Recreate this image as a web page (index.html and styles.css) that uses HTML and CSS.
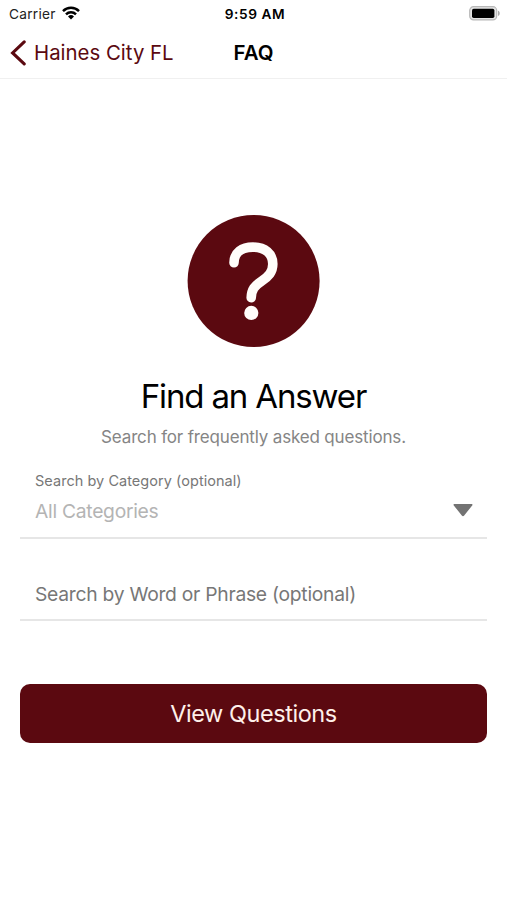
FILE: index.html
```html
<!DOCTYPE html>
<html lang="en">
<head>
<meta charset="utf-8">
<title>FAQ</title>
<link rel="stylesheet" href="styles.css">
</head>
<body>
<div class="status">
  <div class="status-left"><span class="carrier">Carrier</span>
    <svg class="wifi" width="18" height="14" viewBox="0 0 18 14"><g fill="none" stroke="#000" stroke-width="2.5"><path d="M1 5.1a11.4 11.4 0 0 1 16 0"/><path d="M4 8.3a7.1 7.1 0 0 1 10 0"/></g><path d="M9 13.6l-3-3.1a4.3 4.3 0 0 1 6 0z"/></svg>
  </div>
  <span class="time">9:59 AM</span>
  <svg class="battery" width="32" height="15" viewBox="0 0 32 15"><rect x=".7" y=".7" width="27" height="13.2" rx="3.8" fill="#e4e4e4" stroke="#b8b8b8" stroke-width="1.2"/><rect x="3" y="2.7" width="22.4" height="9.2" rx="1.7"/><path d="M29 4.7c2.3.6 2.3 4.5 0 5.2z" fill="#aaa"/></svg>
</div>
<header class="nav">
  <a class="back"><svg width="16" height="26" viewBox="0 0 16 26"><path d="M14.2 1.9L2.6 12.9 14.2 23.9" fill="none" stroke="#5b0910" stroke-width="3.1" stroke-linecap="round"/></svg><span>Haines City FL</span></a>
  <h1>FAQ</h1>
</header>
<main>
  <svg class="hero" width="134" height="134" viewBox="0 0 134 134"><circle cx="66.6" cy="67" r="66" fill="#5b0910"/><path d="M47 48.5C47 38 55 32.8 66 32.8c12 0 19.8 6.6 19.8 17 0 8-4.3 12.3-11 16.8-7.1 4.7-10.4 8.5-10.6 16.9" transform="translate(0 .3)" fill="none" stroke="#fffdfa" stroke-width="9.6" stroke-linecap="round" stroke-linejoin="round"/><circle cx="64.3" cy="98.9" r="7.1" fill="#fffdfa"/></svg>
  <h2>Find an Answer</h2>
  <p class="sub">Search for frequently asked questions.</p>
  <div class="field select">
    <div><div class="label">Search by Category (optional)</div><div class="value">All Categories</div></div>
    <svg width="20" height="14" viewBox="0 0 20 14"><path d="M1.2 1h17.6c.8 0 .9.8.4 1.4l-8 10.2q-1.2 1.2-2.4 0l-8-10.2C.3 1.8.4 1 1.2 1z" fill="#737373"/></svg>
  </div>
  <div class="field phrase"><span>Search by Word or Phrase (optional)</span></div>
  <button>View Questions</button>
</main>
</body>
</html>
```
FILE: styles.css
```css
* { box-sizing: border-box; }
body { margin: 0; height: 900px; overflow: hidden; background: #fff; color: #000; font-family: Inter, "Liberation Sans", sans-serif; }
svg { display: block; flex: none; }
.status { height: 27px; display: grid; grid-template-columns: 1fr auto 1fr; align-items: center; padding: 0 6px 0 9px; }
.status-left { display: flex; align-items: center; gap: 6px; }
.carrier { font-size: 13.7px; line-height: 27px; letter-spacing: .27px; color: #222; position: relative; top: 1px; }
.wifi { margin-top: -2px; }
.time { font-size: 13.7px; font-weight: 600; letter-spacing: .55px; }
.battery { justify-self: end; margin-top: -1px; }
.nav { height: 52px; border-bottom: 1px solid #f0f0f0; display: grid; grid-template-columns: 1fr auto 1fr; align-items: center; padding: 0 10px; }
.back { display: flex; align-items: center; gap: 8px; color: #5b0910; font-size: 20.4px; white-space: nowrap; }
h1 { margin: 0; font-size: 20.4px; font-weight: 600; }
main { padding: 135px 20px 0; display: flex; flex-direction: column; align-items: center; }
h2 { margin: 27px 0 0; font-size: 33px; line-height: 42px; font-weight: 400; letter-spacing: -1.15px; }
.sub { margin: 9px 0 0; font-size: 17px; line-height: 22px; letter-spacing: -.16px; color: #858585; }
.field { width: 467px; border-bottom: 2px solid #e6e6e6; padding: 0 14px 0 15px; display: flex; }
.select { height: 71px; margin-top: 20px; justify-content: space-between; }
.select svg { margin-top: 35px; }
.label { font-size: 14.5px; line-height: 20px; letter-spacing: .04px; margin-top: 3px; color: #777; }
.value { font-size: 19.3px; line-height: 26px; letter-spacing: -.28px; margin-top: 7px; color: #b4b4b4; }
.phrase { height: 82px; padding-top: 42px; font-size: 19.3px; line-height: 26px; letter-spacing: -.27px; color: #777; }
button { width: 467px; height: 59px; margin: 63px 0 0; border: 0; border-radius: 10px; background: #5b0910; color: #fff0ea; font: 400 23.5px Inter, "Liberation Sans", sans-serif; letter-spacing: -.45px; }
```
